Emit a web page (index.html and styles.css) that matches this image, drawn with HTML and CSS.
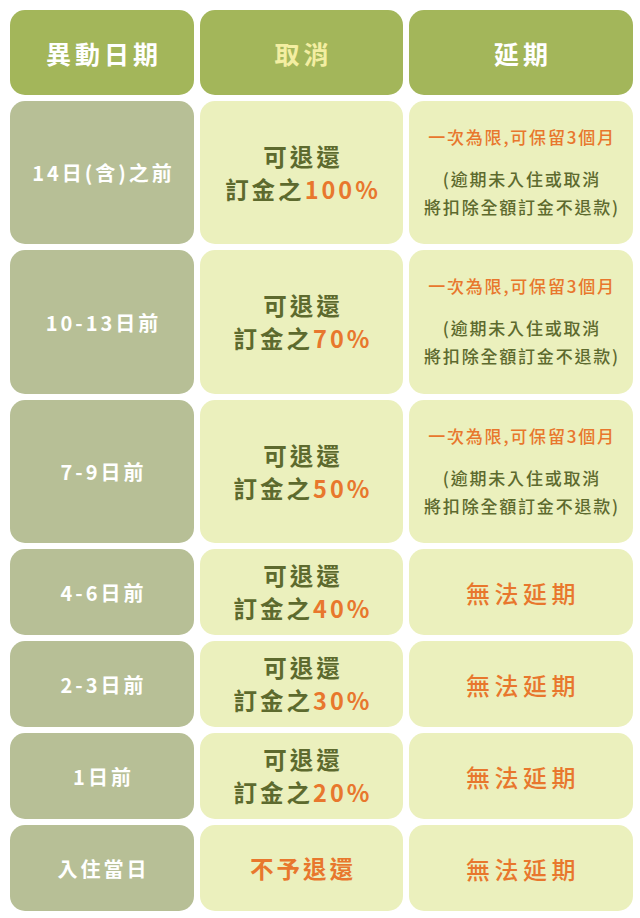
FILE: index.html
```html
<!DOCTYPE html>
<html lang="zh-Hant">
<head>
<meta charset="utf-8">
<link rel="stylesheet" href="styles.css">
</head>
<body>
<div class="table">
  <div class="cell head">異動日期</div>
  <div class="cell head yellow">取消</div>
  <div class="cell head">延期</div>

  <div class="cell when tall">14日(含)之前</div>
  <div class="cell refund"><div>可退還<br>訂金之<span class="pct">100%</span></div></div>
  <div class="cell note"><div class="keep">一次為限,可保留3個月</div><div class="fine">(逾期未入住或取消<br>將扣除全額訂金不退款)</div></div>

  <div class="cell when tall">10-13日前</div>
  <div class="cell refund"><div>可退還<br>訂金之<span class="pct">70%</span></div></div>
  <div class="cell note"><div class="keep">一次為限,可保留3個月</div><div class="fine">(逾期未入住或取消<br>將扣除全額訂金不退款)</div></div>

  <div class="cell when tall">7-9日前</div>
  <div class="cell refund"><div>可退還<br>訂金之<span class="pct">50%</span></div></div>
  <div class="cell note"><div class="keep">一次為限,可保留3個月</div><div class="fine">(逾期未入住或取消<br>將扣除全額訂金不退款)</div></div>

  <div class="cell when">4-6日前</div>
  <div class="cell refund"><div>可退還<br>訂金之<span class="pct">40%</span></div></div>
  <div class="cell none">無法延期</div>

  <div class="cell when">2-3日前</div>
  <div class="cell refund"><div>可退還<br>訂金之<span class="pct">30%</span></div></div>
  <div class="cell none">無法延期</div>

  <div class="cell when">1日前</div>
  <div class="cell refund"><div>可退還<br>訂金之<span class="pct">20%</span></div></div>
  <div class="cell none">無法延期</div>

  <div class="cell when">入住當日</div>
  <div class="cell refund orange">不予退還</div>
  <div class="cell none">無法延期</div>
</div>
</body>
</html>
```
FILE: styles.css
```css
html, body {
  margin: 0;
  padding: 0;
  background: #ffffff;
}
body {
  font-family: "Noto Sans CJK TC", "Noto Sans", sans-serif;
}
.table {
  display: grid;
  grid-template-columns: 184px 203px 224px;
  grid-template-rows: 85px 143px 144px 143px 86px 86px 86px 86px;
  column-gap: 6px;
  row-gap: 6px;
  padding: 10px 0 0 10px;
}
.cell {
  border-radius: 15px;
  display: flex;
  flex-direction: column;
  align-items: center;
  justify-content: center;
  text-align: center;
  background: #ebf0bd;
}
.head {
  background: #a3b65a;
  color: #ffffff;
  font-size: 25px;
  font-weight: 700;
  letter-spacing: 4px;
  padding-left: 4px;
}
.head.yellow {
  color: #f3eea2;
}
.when {
  background: #b7bf96;
  color: #ffffff;
  font-size: 20px;
  font-weight: 700;
  letter-spacing: 3px;
  padding-left: 3px;
}
.refund {
  color: #5d6a2e;
  font-size: 23.5px;
  font-weight: 700;
  letter-spacing: 3px;
  line-height: 33px;
  padding-left: 3px;
}
.pct, .orange {
  color: #e8772d;
}
.note {
  font-size: 17px;
  font-weight: 500;
  letter-spacing: 1.8px;
  padding-left: 2px;
}
.keep {
  color: #e8772d;
  line-height: 24px;
  margin-bottom: 16px;
}
.fine {
  color: #5d6a2e;
  line-height: 28px;
}
.none {
  color: #e8772d;
  font-size: 24px;
  font-weight: 500;
  letter-spacing: 4.5px;
  padding-left: 4px;
}
```
